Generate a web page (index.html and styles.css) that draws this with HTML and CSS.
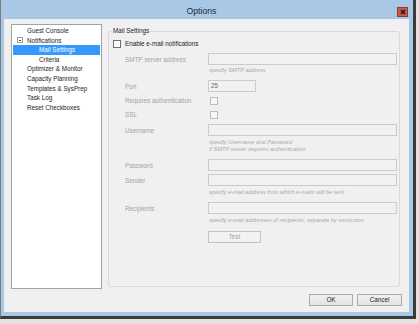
FILE: index.html
```html
<!DOCTYPE html>
<html>
<head>
<meta charset="utf-8">
<title>Options</title>
<link rel="stylesheet" href="styles.css">
</head>
<body>
<div class="outer">
  <div class="window">
    <div class="titlebar">
      <div class="title">Options</div>
      <div class="close"><svg width="8" height="8" viewBox="0 0 8 8"><path d="M2 2L6 6M6 2L2 6" stroke="#1a1a1a" stroke-width="1.6" fill="none"/></svg></div>
    </div>
    <div class="client">
      <div class="main">
        <div class="tree">
          <div class="node l0">Guest Console</div>
          <div class="node l0"><span class="exp"></span>Notifications</div>
          <div class="node l1 sel">Mail Settings</div>
          <div class="node l1">Criteria</div>
          <div class="node l0">Optimizer &amp; Monitor</div>
          <div class="node l0">Capacity Planning</div>
          <div class="node l0">Templates &amp; SysPrep</div>
          <div class="node l0">Task Log</div>
          <div class="node l0">Reset Checkboxes</div>
        </div>
        <fieldset class="group">
          <legend>Mail Settings</legend>
          <div class="enable"><span class="check"></span><span>Enable e-mail notifications</span></div>
          <div class="form">
            <div class="row r-smtp"><span class="lbl">SMTP server address</span><span class="input"></span></div>
            <div class="hint h-smtp">specify SMTP address</div>
            <div class="row r-port"><span class="lbl">Port</span><span class="input port">25</span></div>
            <div class="row r-check r-auth"><span class="lbl">Requires authentication</span><span class="check off"></span></div>
            <div class="row r-check r-ssl"><span class="lbl">SSL</span><span class="check off"></span></div>
            <div class="row r-user"><span class="lbl">Username</span><span class="input"></span></div>
            <div class="hint h-user">specify Username and Password<br>if SMTP server requires authentication</div>
            <div class="row r-pass"><span class="lbl">Password</span><span class="input"></span></div>
            <div class="row r-sender"><span class="lbl">Sender</span><span class="input"></span></div>
            <div class="hint h-sender">specify e-mail address from which e-mails will be sent</div>
            <div class="row r-rcpt"><span class="lbl">Recipients</span><span class="input"></span></div>
            <div class="hint h-rcpt">specify e-mail addresses of recipients, separate by semicolon</div>
            <div class="row r-test"><span class="lbl"></span><button class="btn test" disabled>Test</button></div>
          </div>
        </fieldset>
      </div>
      <div class="buttons">
        <button class="btn ok">OK</button>
        <button class="btn cancel">Cancel</button>
      </div>
    </div>
  </div>
</div>
</body>
</html>
```

FILE: styles.css
```css
html, body {
  margin: 0;
  padding: 0;
}
body {
  background: #e2e2e2;
  font-family: "Liberation Sans", Arial, sans-serif;
  font-size: 6.3px;
  color: #1c1c1c;
  width: 419px;
  height: 324px;
  overflow: hidden;
}
.outer {
  width: 412px;
  height: 316px;
  border-left: 1px solid #7a7a7a;
  border-right: 3px solid #3b3b3b;
  border-bottom: 3px solid #3b3b3b;
}
.window {
  width: 412px;
  height: 316px;
  box-sizing: border-box;
  background: #a9c8e6;
  padding: 0 4px 4px 3px;
  display: flex;
  flex-direction: column;
}
.titlebar {
  height: 19px;
  display: flex;
  align-items: flex-start;
  margin: 0 -4px 0 -3px;
  padding: 0 5px 0 5px;
}
.title {
  flex: 1;
  text-align: center;
  font-size: 8.7px;
  line-height: 10px;
  padding-top: 6px;
  color: #1e2a36;
}
.close {
  margin-top: 7px;
  width: 11px;
  height: 10px;
  box-sizing: border-box;
  background: #c9584a;
  border: 1px solid #8d3b33;
  display: flex;
  align-items: center;
  justify-content: center;
}
.client {
  flex: 1;
  background: #f0f0f0;
  padding: 5px 7px 6px 7px;
  display: flex;
  flex-direction: column;
}
.main {
  display: flex;
  gap: 6px;
  height: 265px;
}
.tree {
  width: 91px;
  height: 265px;
  box-sizing: border-box;
  background: #fff;
  border: 1px solid #a3a3a3;
  padding-top: 1px;
}
.node {
  line-height: 9.6px;
  height: 9.6px;
  display: flex;
  align-items: center;
  white-space: nowrap;
  margin: 0 1px;
}
.node.l0 { padding-left: 14px; }
.node.l1 { padding-left: 26px; }
.node.sel {
  background: #3399ff;
  color: #fff;
}
.exp {
  width: 6px;
  height: 6px;
  box-sizing: border-box;
  border: 1px solid #9a9a9a;
  margin-left: -10px;
  margin-right: 4px;
  position: relative;
  background: #fff;
}
.exp::after {
  content: "";
  position: absolute;
  left: 1px;
  top: 1.5px;
  width: 2px;
  height: 1px;
  background: #444;
}
.group {
  flex: 1;
  margin: 3px 2px 0 0;
  height: 260px;
  box-sizing: border-box;
  border: 1px solid #d9d9d9;
  border-radius: 3px;
  padding: 0 2px 0 4px;
  min-width: 0;
}
.group legend {
  font-size: 6.3px;
  line-height: 8px;
  padding: 0 1px;
  margin-left: -1px;
  color: #1c1c1c;
}
.enable {
  display: flex;
  align-items: center;
  height: 9px;
  margin-top: 4px;
  gap: 4px;
}
.check {
  width: 8px;
  height: 8px;
  box-sizing: border-box;
  border: 1px solid #6e6e6e;
  background: #fff;
  display: inline-block;
}
.check.off {
  border-color: #bcbcbc;
  background: #f6f6f6;
  margin-left: 2px;
}
.form {
  margin-left: 12px;
}
.row {
  display: flex;
  align-items: center;
}
.lbl {
  width: 83px;
  flex: none;
  color: #a3a3a3;
  white-space: nowrap;
}
.input {
  flex: 1;
  height: 12px;
  box-sizing: border-box;
  border: 1px solid #cbcbcb;
  background: #f1f1f1;
  color: #6a6a6a;
  line-height: 10px;
  padding-left: 2px;
}
.input.port {
  flex: none;
  width: 48px;
}
.r-check { height: 9px; }
.hint {
  margin-left: 83px;
  padding-left: 1px;
  font-size: 5.7px;
  line-height: 7px;
  font-style: italic;
  color: #a9a9a9;
  white-space: nowrap;
}
.r-smtp { margin-top: 5px; }
.h-smtp { margin-top: 2px; }
.r-port { margin-top: 6px; }
.r-auth { margin-top: 4px; }
.r-ssl { margin-top: 5px; }
.r-user { margin-top: 5px; }
.h-user { margin-top: 3px; }
.r-pass { margin-top: 6px; }
.r-sender { margin-top: 3px; }
.h-sender { margin-top: 3px; }
.r-rcpt { margin-top: 6px; }
.h-rcpt { margin-top: 3px; }
.r-test { margin-top: 7px; }
.btn {
  font-family: "Liberation Sans", Arial, sans-serif;
  font-size: 6.3px;
  height: 12px;
  padding: 0;
  margin: 0;
  box-sizing: border-box;
  border: 1px solid #acacac;
  background: linear-gradient(#f0f0f0, #e3e3e3);
  color: #1c1c1c;
  line-height: 10px;
}
.btn.test {
  width: 53px;
  border-color: #c3c3c3;
  background: #f2f2f2;
  color: #a3a3a3;
}
.buttons {
  margin-top: 5px;
  display: flex;
  justify-content: flex-end;
  gap: 4px;
}
.btn.ok { width: 44px; }
.btn.cancel { width: 45px; }
```
